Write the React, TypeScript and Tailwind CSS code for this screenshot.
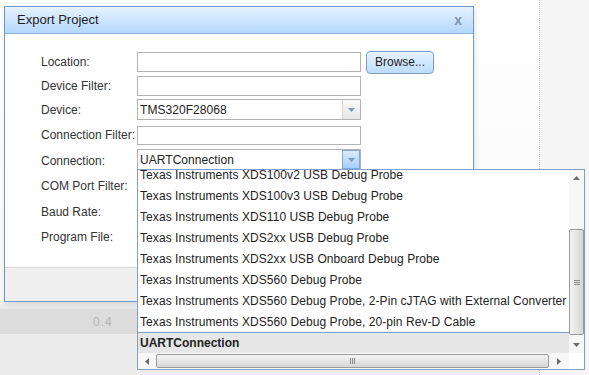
import React from 'react';

const items = [
  'Texas Instruments XDS100v2 USB Debug Probe',
  'Texas Instruments XDS100v3 USB Debug Probe',
  'Texas Instruments XDS110 USB Debug Probe',
  'Texas Instruments XDS2xx USB Debug Probe',
  'Texas Instruments XDS2xx USB Onboard Debug Probe',
  'Texas Instruments XDS560 Debug Probe',
  'Texas Instruments XDS560 Debug Probe, 2-Pin cJTAG with External Converter',
  'Texas Instruments XDS560 Debug Probe, 20-pin Rev-D Cable',
];

const Tri: React.FC<{ dir: 'up' | 'down' | 'left' | 'right'; color?: string }> = ({ dir, color = '#6b6b6b' }) => {
  const pts = {
    up: '0,4 7,4 3.5,0',
    down: '0,0 7,0 3.5,4',
    left: '4,0 4,7 0,3.5',
    right: '0,0 0,7 4,3.5',
  }[dir];
  const w = dir === 'up' || dir === 'down' ? 7 : 4;
  const h = dir === 'up' || dir === 'down' ? 4 : 7;
  return (
    <svg width={w} height={h} viewBox={`0 0 ${w} ${h}`}>
      <polygon points={pts} fill={color} />
    </svg>
  );
};

const Input: React.FC<{ h?: string }> = ({ h = 'h-[20px]' }) => (
  <div className={`${h} w-[224px] border border-[#b4b4b4] bg-white`} />
);

const Combo: React.FC<{ value: string; active?: boolean }> = ({ value, active }) => (
  <div className="flex h-[21px] w-[224px] self-start mt-px border border-[#b4b4b4] bg-white">
    <div className="flex flex-1 items-center pl-[2px] text-[12px] tracking-[0.05px] text-[#222]">{value}</div>
    <div
      className={
        active
          ? 'flex w-[18px] items-center justify-center border border-[#7fa9d6] bg-gradient-to-b from-[#d9ecfe] to-[#a6d0fa]'
          : 'flex w-[18px] items-center justify-center border-l border-[#d4d4d4] bg-gradient-to-b from-[#fafafa] to-[#e6e6e6]'
      }
    >
      <Tri dir="down" color="#7f98b8" />
    </div>
  </div>
);

const Row: React.FC<{ label: string; h: string; children?: React.ReactNode }> = ({ label, h, children }) => (
  <div className={`flex items-center ${h}`}>
    <div className="w-[96px] shrink-0 whitespace-nowrap">{label}</div>
    {children}
  </div>
);

export default function App() {
  return (
    <div className="relative h-[375px] w-[589px] overflow-hidden bg-white font-['Liberation_Sans',Arial,sans-serif] text-[12px] text-[#333]">
      {/* application behind the dialog */}
      <div className="flex h-full">
        <div className="flex w-[539px] flex-col">
          <div className="h-[301px] bg-gradient-to-b from-white to-[#f8f8f8]" />
          <div className="h-[8px] bg-gradient-to-b from-[#f2f2f2] to-[#e8e8e8]" />
          <div className="flex h-[25px] items-center bg-[#dcdcdc] pl-[93px] tracking-[1px] text-[#b4b4b4]">0.4</div>
          <div className="flex-1 bg-[#ececec]" />
        </div>
        <div className="flex-1 border-l border-dotted border-[#c4c4c4] bg-[#f5f5f5]" />
      </div>

      {/* dialog */}
      <div className="absolute left-[4px] top-[6px] flex h-[296px] w-[470px] flex-col border border-[#6e9bc8] bg-white shadow-[1px_2px_5px_rgba(0,0,0,0.12)]">
        <div className="flex h-[27px] items-center justify-between border-b border-[#8cb3da] bg-gradient-to-b from-[#e6f2ff] to-[#b3d8fe] pl-[12px] pr-[11px]">
          <span className="text-[13px] text-[#1e1e1e]">Export Project</span>
          <span className="text-[14px] font-bold leading-none text-[#7f93ab]">x</span>
        </div>
        <div className="flex-1 pl-[36px] pt-[16px]">
          <Row label="Location:" h="h-[24px]">
            <Input />
            <button className="ml-[5px] h-[23px] w-[68px] rounded-[4px] border border-[#7c9fc6] bg-gradient-to-b from-[#e8f3fe] to-[#bcdcfb] text-[12px] text-[#1e1e1e]">
              Browse...
            </button>
          </Row>
          <Row label="Device Filter:" h="h-[24px]">
            <Input />
          </Row>
          <Row label="Device:" h="h-[24px]">
            <Combo value="TMS320F28068" />
          </Row>
          <Row label="Connection Filter:" h="h-[26px]">
            <Input h="h-[19px]" />
          </Row>
          <Row label="Connection:" h="h-[25px]">
            <Combo value="UARTConnection" active />
          </Row>
          <Row label="COM Port Filter:" h="h-[26px]" />
          <Row label="Baud Rate:" h="h-[25px]" />
          <Row label="Program File:" h="h-[26px]" />
        </div>
        <div className="h-[34px] border-t border-[#d6d6d6] bg-[#efefef]" />
      </div>

      {/* dropdown list */}
      <div className="absolute left-[137px] top-[169px] flex h-[201px] w-[448px] flex-col border border-[#7f9fc6] bg-white text-[#222]">
        <div className="flex min-h-0 flex-1">
          <div className="flex min-w-0 flex-1 flex-col">
            <div className="flex-1 overflow-hidden">
              <div className="-mt-[6px]">
                {items.map((t) => (
                  <div key={t} className="flex h-[21px] items-center whitespace-nowrap pl-[2px] tracking-[0.07px]">
                    {t}
                  </div>
                ))}
              </div>
            </div>
            <div className="flex h-[21px] items-center border-t border-[#7f9fc6] bg-[#e6e6e6] pl-[2px] font-bold">
              UARTConnection
            </div>
          </div>
          {/* vertical scrollbar */}
          <div className="flex w-[15px] flex-col bg-[#f7f7f7]">
            <div className="flex h-[16px] items-center justify-center">
              <Tri dir="up" />
            </div>
            <div className="flex-1 pt-[43px]">
              <div className="flex h-[106px] items-center justify-center rounded-[2px] border border-[#9a9a9a] bg-gradient-to-r from-[#f4f4f4] to-[#d6d6d6]">
                <div className="flex flex-col gap-[1px]">
                  <div className="h-px w-[6px] bg-[#8a8a8a]" />
                  <div className="h-px w-[6px] bg-[#8a8a8a]" />
                  <div className="h-px w-[6px] bg-[#8a8a8a]" />
                </div>
              </div>
            </div>
            <div className="flex h-[16px] items-center justify-center">
              <Tri dir="down" />
            </div>
          </div>
        </div>
        {/* horizontal scrollbar */}
        <div className="flex h-[16px]">
          <div className="flex flex-1 bg-[#f7f7f7]">
            <div className="flex w-[18px] items-center justify-center">
              <Tri dir="left" />
            </div>
            <div className="my-px flex w-[393px] items-center justify-center rounded-[2px] border border-[#9a9a9a] bg-gradient-to-b from-[#f4f4f4] to-[#d6d6d6]">
              <div className="flex gap-[1px]">
                <div className="h-[6px] w-px bg-[#8a8a8a]" />
                <div className="h-[6px] w-px bg-[#8a8a8a]" />
                <div className="h-[6px] w-px bg-[#8a8a8a]" />
              </div>
            </div>
            <div className="flex flex-1 items-center justify-center">
              <Tri dir="right" />
            </div>
          </div>
          <div className="w-[15px] bg-white" />
        </div>
      </div>
    </div>
  );
}
